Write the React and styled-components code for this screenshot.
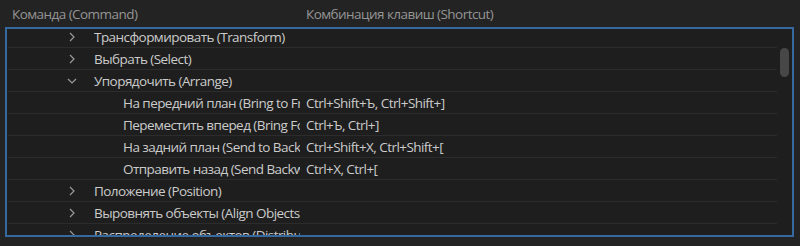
import React from "react";
import styled, { createGlobalStyle } from "styled-components";

const GlobalStyle = createGlobalStyle`
  body {
    margin: 0;
    background: #232323;
    font-family: "Open Sans", "Noto Sans", sans-serif;
  }
`;

const Panel = styled.div`
  width: 800px;
  height: 246px;
  background: #232323;
  overflow: hidden;
`;

const Header = styled.div`
  display: flex;
  height: 27px;
  align-items: center;
  color: #959595;
  font-size: 13.5px;
  letter-spacing: -0.55px;
`;

const HeaderCell = styled.div`
  width: ${(p) => p.width || "auto"};
  flex: ${(p) => (p.width ? "none" : 1)};
  padding-left: ${(p) => p.pad || 0}px;
  box-sizing: border-box;
  white-space: nowrap;
`;

const Frame = styled.div`
  margin-left: 5px;
  width: 789px;
  height: 210px;
  box-sizing: border-box;
  border: 2px solid #3569a0;
  background: #1e1e1e;
  display: flex;
  overflow: hidden;
`;

const List = styled.div`
  flex: 1;
  margin-top: -3px;
  padding-left: 1px;
`;

const Row = styled.div`
  display: flex;
  height: 22px;
  box-sizing: border-box;
  border-bottom: 1px solid #2c2c2c;
  align-items: center;
  color: #cbcbcb;
  font-size: 13.5px;
  letter-spacing: -0.55px;
  white-space: nowrap;
`;

const CommandCell = styled.div`
  width: 292px;
  flex: none;
  display: flex;
  align-items: center;
  overflow: hidden;
  padding-left: ${(p) => (p.child ? 115 : 56)}px;
  box-sizing: border-box;
`;

const Toggle = styled.span`
  width: 30px;
  flex: none;
  display: flex;
  align-items: center;
  padding-left: ${(p) => (p.open ? 3 : 5)}px;
  box-sizing: border-box;
`;

const ShortcutCell = styled.div`
  padding-left: 6px;
`;

const Track = styled.div`
  width: 15px;
  flex: none;
  padding-top: 19px;
  display: flex;
  justify-content: center;
`;

const Thumb = styled.div`
  width: 9px;
  height: 29px;
  border-radius: 5px;
  background: #474747;
`;

const Chevron = ({ open }) =>
  open ? (
    <svg width="10" height="6" viewBox="0 0 10 6">
      <polyline points="1,1 5,5 9,1" fill="none" stroke="#9a9a9a" strokeWidth="1.2" />
    </svg>
  ) : (
    <svg width="6" height="10" viewBox="0 0 6 10">
      <polyline points="1,1 5,5 1,9" fill="none" stroke="#9a9a9a" strokeWidth="1.2" />
    </svg>
  );

const rows = [
  { name: "Трансформировать (Transform)", group: true },
  { name: "Выбрать (Select)", group: true },
  { name: "Упорядочить (Arrange)", group: true, open: true },
  { name: "На передний план (Bring to Front)", keys: "Ctrl+Shift+Ъ, Ctrl+Shift+]" },
  { name: "Переместить вперед (Bring Forward)", keys: "Ctrl+Ъ, Ctrl+]" },
  { name: "На задний план (Send to Back)", keys: "Ctrl+Shift+Х, Ctrl+Shift+[" },
  { name: "Отправить назад (Send Backward)", keys: "Ctrl+Х, Ctrl+[" },
  { name: "Положение (Position)", group: true },
  { name: "Выровнять объекты (Align Objects)", group: true },
  { name: "Распределение объектов (Distribute Objects)", group: true },
];

const App = () => {
  return (
    <Panel>
      <GlobalStyle />
      <Header>
        <HeaderCell width="306px" pad={12}>
          Команда (Command)
        </HeaderCell>
        <HeaderCell>Комбинация клавиш (Shortcut)</HeaderCell>
      </Header>
      <Frame>
        <List>
          {rows.map((r) => (
            <Row key={r.name}>
              <CommandCell child={!r.group}>
                {r.group && (
                  <Toggle open={r.open}>
                    <Chevron open={r.open} />
                  </Toggle>
                )}
                {r.name}
              </CommandCell>
              <ShortcutCell>{r.keys}</ShortcutCell>
            </Row>
          ))}
        </List>
        <Track>
          <Thumb />
        </Track>
      </Frame>
    </Panel>
  );
};

export default App;
